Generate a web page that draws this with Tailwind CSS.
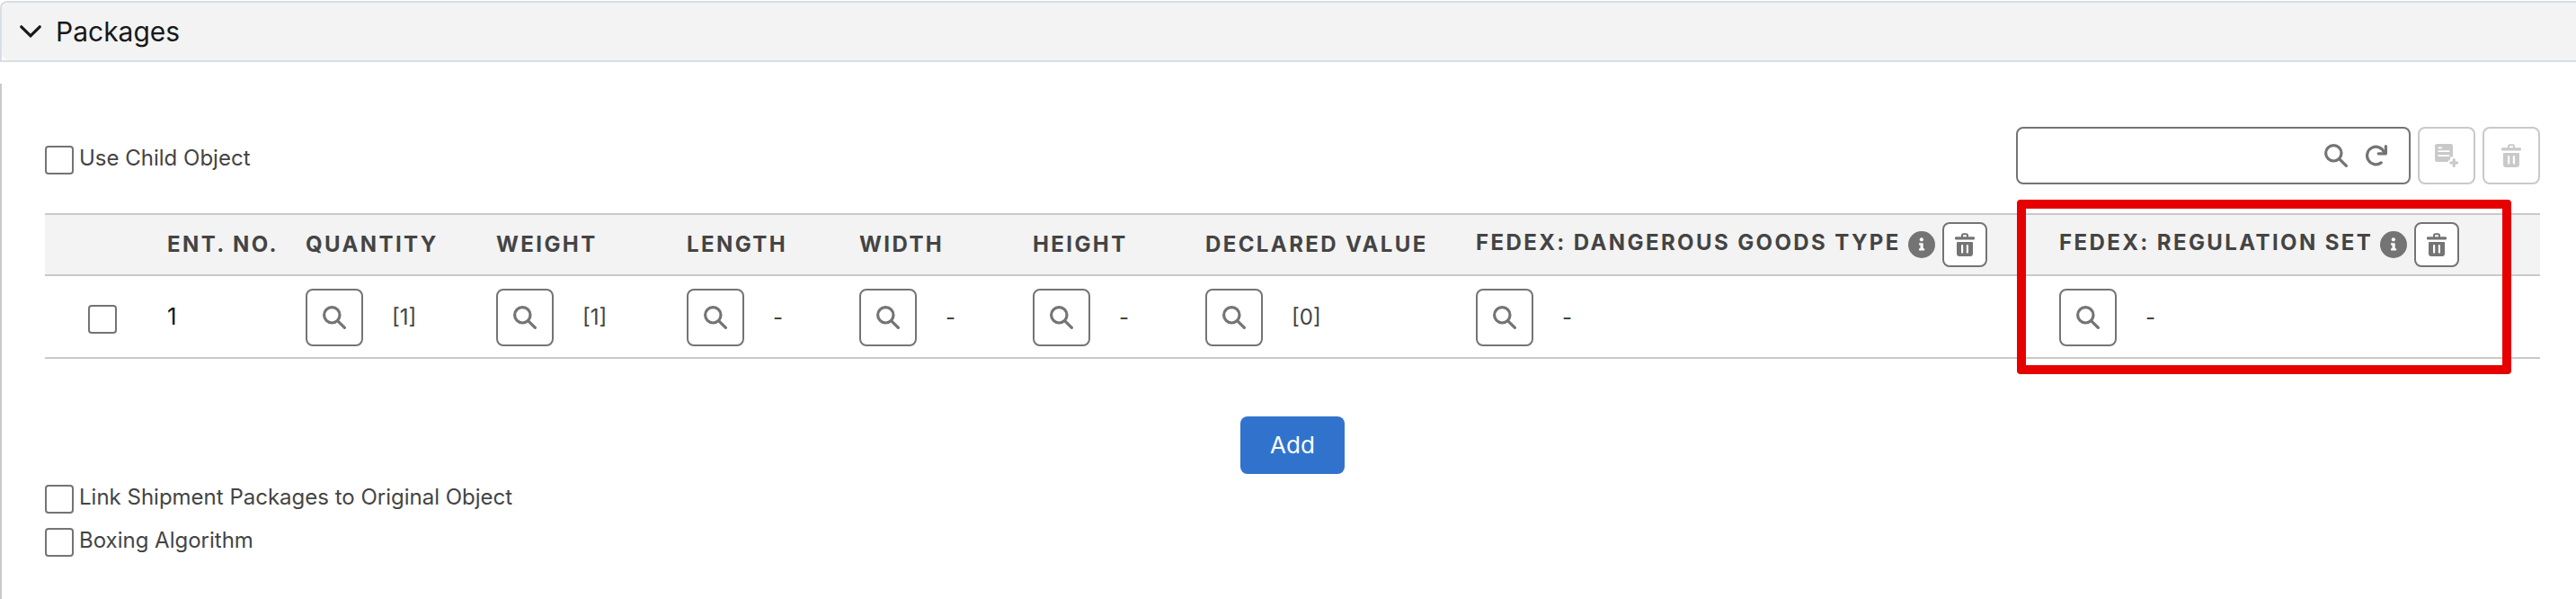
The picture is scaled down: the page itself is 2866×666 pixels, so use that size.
<!DOCTYPE html>
<html lang="en">
<head>
  <meta charset="UTF-8">
  <meta name="viewport" content="width=device-width, initial-scale=1.0">
  <title>Packages</title>
  <script src="https://cdn.jsdelivr.net/npm/@tailwindcss/browser@4"></script>
</head>
<body class="bg-white min-h-screen flex flex-col font-['Inter','Liberation_Sans',sans-serif] text-2xl text-[#444444]">

  <!-- Icons -->
  <svg class="hidden">
    <symbol id="icon-search" viewBox="0 0 26 26">
      <circle cx="10.3" cy="10.3" r="8.7" fill="none" stroke="currentColor" stroke-width="3.2"/>
      <path d="M16.8 16.8L24.4 24.4" fill="none" stroke="currentColor" stroke-width="3.2" stroke-linecap="round"/>
    </symbol>
    <symbol id="icon-refresh" viewBox="0 0 24 24">
      <path d="M17.2 19.9A9.8 9.8 0 1 1 20.6 8.6" fill="none" stroke="currentColor" stroke-width="3.2" stroke-linecap="round"/>
      <path d="M22.4 1.6V9.8H14.2" fill="none" stroke="currentColor" stroke-width="3.2" stroke-linecap="round" stroke-linejoin="round"/>
    </symbol>
    <symbol id="icon-note-add" viewBox="0 0 26 26">
      <path fill="currentColor" fill-rule="evenodd" d="M2.5 0H17.5Q20 0 20 2.5V14.2H18.6Q17 14.2 17 15.8V17L14 20H2.5Q0 20 0 17.5V2.5Q0 0 2.5 0ZM4.2 3.4a.9 .9 0 0 0 0 1.8H7.2a.9 .9 0 0 0 0-1.8ZM4.2 7.3a.9 .9 0 0 0 0 1.8H15.6a.9 .9 0 0 0 0-1.8ZM4.2 12.2a.9 .9 0 0 0 0 1.8H15.6a.9 .9 0 0 0 0-1.8Z"/>
      <path d="M21.2 17.6V24.4M17.8 21H24.6" fill="none" stroke="currentColor" stroke-width="3.2" stroke-linecap="round"/>
    </symbol>
    <symbol id="icon-trash" viewBox="0 0 22 26">
      <path d="M8 5V3Q8 1.3 9.6 1.3H12.4Q14 1.3 14 3V5" fill="none" stroke="currentColor" stroke-width="2"/>
      <rect x="0" y="4.3" width="22" height="3.2" rx="1.2" fill="currentColor"/>
      <path fill="currentColor" fill-rule="evenodd" d="M2 11Q2 10 3 10H19Q20 10 20 11V23Q20 26 17 26H5Q2 26 2 23ZM7 14.2V21.6a1.1 1.1 0 0 0 2.2 0V14.2a1.1 1.1 0 0 0-2.2 0ZM12.8 14.2V21.6a1.1 1.1 0 0 0 2.2 0V14.2a1.1 1.1 0 0 0-2.2 0Z"/>
    </symbol>
    <symbol id="icon-info" viewBox="0 0 30 30">
      <circle cx="15" cy="15" r="15" fill="currentColor"/>
      <circle cx="14.9" cy="9.3" r="2.1" fill="#ffffff"/>
      <path fill="#ffffff" d="M12.6 13.2H16.1Q16.7 13.2 16.7 13.8V19.2H17.6Q18.2 19.2 18.2 19.8V20.8Q18.2 21.4 17.6 21.4H12.6Q12 21.4 12 20.8V19.8Q12 19.2 12.6 19.2H13.5V15.4H12.6Q12 15.4 12 14.8V13.8Q12 13.2 12.6 13.2Z"/>
    </symbol>
  </svg>

  <!-- Section Header -->
  <header class="mt-px border-2 border-r-0 border-[#d8dde6] rounded-tl-lg">
    <button type="button" aria-expanded="true" class="w-full h-16 pl-5 flex items-center gap-4 rounded-l-lg bg-[#f3f3f3] text-3xl text-[#181818]">
      <svg class="w-6 h-3.5" viewBox="0 0 24 14"><path d="M1.8 1.8L12 11.8L22.2 1.8" fill="none" stroke="currentColor" stroke-width="3.2" stroke-linecap="round"/></svg>
      Packages
    </button>
  </header>

  <!-- Section Content -->
  <main class="mt-6 flex-1 border-l-2 border-[#c9c9c9] pt-12 pl-12 pr-10">

    <div class="flex justify-between items-center">
      <div class="h-8 mt-2.5 flex items-center gap-1.5">
        <input type="checkbox" id="use-child" class="appearance-none size-8 border-2 border-[#747474] rounded bg-white">
        <label for="use-child" class="pb-1">Use Child Object</label>
      </div>

      <!-- Toolbar -->
      <div class="flex gap-2">
        <div class="w-[439px] h-16 pl-6 pr-6 flex items-center gap-5 border-2 border-[#747474] rounded-lg text-[#747474]">
          <input type="text" aria-label="Search field" class="flex-1 min-w-0 h-full focus:outline-none">
          <button type="button" aria-label="Search"><svg class="size-[26px]"><use href="#icon-search"/></svg></button>
          <button type="button" aria-label="Refresh"><svg class="size-6"><use href="#icon-refresh"/></svg></button>
        </div>
        <button type="button" aria-label="Add field" disabled class="size-16 flex justify-center items-center border-2 border-[#c9c9c9] rounded-lg text-[#c9c9c9]"><svg class="size-[26px]"><use href="#icon-note-add"/></svg></button>
        <button type="button" aria-label="Delete field" disabled class="size-16 flex justify-center items-center border-2 border-[#c9c9c9] rounded-lg text-[#c9c9c9]"><svg class="w-[22px] h-[26px]"><use href="#icon-trash"/></svg></button>
      </div>
    </div>

    <!-- Packages Table -->
    <div class="relative mt-8">
      <table class="w-full table-fixed border-separate border-spacing-0 text-left">
        <colgroup>
          <col class="w-[120px]">
          <col class="w-[154px]">
          <col class="w-[212px]">
          <col class="w-[212px]">
          <col class="w-[192px]">
          <col class="w-[193px]">
          <col class="w-[192px]">
          <col class="w-[301px]">
          <col class="w-[649px]">
          <col>
        </colgroup>
        <thead class="bg-[#f3f3f3] tracking-widest whitespace-nowrap">
          <tr class="h-[70px]">
            <th class="border-y-2 border-[#c9c9c9]"></th>
            <th class="border-y-2 border-[#c9c9c9] pl-4">ENT. NO.</th>
            <th class="border-y-2 border-[#c9c9c9] pl-4">QUANTITY</th>
            <th class="border-y-2 border-[#c9c9c9] pl-4">WEIGHT</th>
            <th class="border-y-2 border-[#c9c9c9] pl-4">LENGTH</th>
            <th class="border-y-2 border-[#c9c9c9] pl-4">WIDTH</th>
            <th class="border-y-2 border-[#c9c9c9] pl-4">HEIGHT</th>
            <th class="border-y-2 border-[#c9c9c9] pl-4">DECLARED VALUE</th>
            <th class="border-y-2 border-[#c9c9c9] pl-4">
              <div class="flex items-center gap-2">
                <span class="pb-1">FEDEX: DANGEROUS GOODS TYPE</span>
                <svg class="size-[30px] text-[#747474]"><use href="#icon-info"/></svg>
                <button type="button" aria-label="Delete column" class="size-[50px] flex justify-center items-center bg-white border-2 border-[#747474] rounded-lg text-[#747474]"><svg class="w-[22px] h-[26px]"><use href="#icon-trash"/></svg></button>
              </div>
            </th>
            <th class="border-y-2 border-[#c9c9c9] pl-4">
              <div class="flex items-center gap-2">
                <span class="pb-1">FEDEX: REGULATION SET</span>
                <svg class="size-[30px] text-[#747474]"><use href="#icon-info"/></svg>
                <button type="button" aria-label="Delete column" class="size-[50px] flex justify-center items-center bg-white border-2 border-[#747474] rounded-lg text-[#747474]"><svg class="w-[22px] h-[26px]"><use href="#icon-trash"/></svg></button>
              </div>
            </th>
          </tr>
        </thead>
        <tbody>
          <tr class="h-[92px]">
            <td class="border-b-2 border-[#c9c9c9] pl-12 pt-1.5">
              <input type="checkbox" aria-label="Select package 1" class="block appearance-none size-8 border-2 border-[#747474] rounded bg-white">
            </td>
            <td class="border-b-2 border-[#c9c9c9] pl-4 text-[26px] text-[#181818]">1</td>
            <td class="border-b-2 border-[#c9c9c9] pl-4 pt-0.5">
              <div class="flex items-center gap-8">
                <button type="button" aria-label="Look up quantity" class="size-16 flex justify-center items-center border-2 border-[#747474] rounded-lg text-[#747474]"><svg class="size-[26px]"><use href="#icon-search"/></svg></button>
                [1]
              </div>
            </td>
            <td class="border-b-2 border-[#c9c9c9] pl-4 pt-0.5">
              <div class="flex items-center gap-8">
                <button type="button" aria-label="Look up weight" class="size-16 flex justify-center items-center border-2 border-[#747474] rounded-lg text-[#747474]"><svg class="size-[26px]"><use href="#icon-search"/></svg></button>
                [1]
              </div>
            </td>
            <td class="border-b-2 border-[#c9c9c9] pl-4 pt-0.5">
              <div class="flex items-center gap-8">
                <button type="button" aria-label="Look up length" class="size-16 flex justify-center items-center border-2 border-[#747474] rounded-lg text-[#747474]"><svg class="size-[26px]"><use href="#icon-search"/></svg></button>
                -
              </div>
            </td>
            <td class="border-b-2 border-[#c9c9c9] pl-4 pt-0.5">
              <div class="flex items-center gap-8">
                <button type="button" aria-label="Look up width" class="size-16 flex justify-center items-center border-2 border-[#747474] rounded-lg text-[#747474]"><svg class="size-[26px]"><use href="#icon-search"/></svg></button>
                -
              </div>
            </td>
            <td class="border-b-2 border-[#c9c9c9] pl-4 pt-0.5">
              <div class="flex items-center gap-8">
                <button type="button" aria-label="Look up height" class="size-16 flex justify-center items-center border-2 border-[#747474] rounded-lg text-[#747474]"><svg class="size-[26px]"><use href="#icon-search"/></svg></button>
                -
              </div>
            </td>
            <td class="border-b-2 border-[#c9c9c9] pl-4 pt-0.5">
              <div class="flex items-center gap-8">
                <button type="button" aria-label="Look up declared value" class="size-16 flex justify-center items-center border-2 border-[#747474] rounded-lg text-[#747474]"><svg class="size-[26px]"><use href="#icon-search"/></svg></button>
                [0]
              </div>
            </td>
            <td class="border-b-2 border-[#c9c9c9] pl-4 pt-0.5">
              <div class="flex items-center gap-8">
                <button type="button" aria-label="Look up dangerous goods type" class="size-16 flex justify-center items-center border-2 border-[#747474] rounded-lg text-[#747474]"><svg class="size-[26px]"><use href="#icon-search"/></svg></button>
                -
              </div>
            </td>
            <td class="border-b-2 border-[#c9c9c9] pl-4 pt-0.5">
              <div class="flex items-center gap-8">
                <button type="button" aria-label="Look up regulation set" class="size-16 flex justify-center items-center border-2 border-[#747474] rounded-lg text-[#747474]"><svg class="size-[26px]"><use href="#icon-search"/></svg></button>
                -
              </div>
            </td>
          </tr>
        </tbody>
      </table>

      <!-- Highlight around the last column -->
      <div class="absolute -top-[15px] -bottom-[17px] right-8 w-[550px] border-10 border-[#e60000] rounded pointer-events-none"></div>
    </div>

    <div class="mt-16 flex justify-center">
      <button type="button" class="h-16 w-[116px] bg-[#3173cc] hover:bg-[#2560b0] text-white text-[26px] rounded-lg">Add</button>
    </div>

    <!-- Options -->
    <div class="mt-3 flex flex-col gap-4">
      <div class="h-8 flex items-center gap-1.5">
        <input type="checkbox" id="link-packages" class="appearance-none size-8 border-2 border-[#747474] rounded bg-white">
        <label for="link-packages" class="pb-1">Link Shipment Packages to Original Object</label>
      </div>
      <div class="h-8 flex items-center gap-1.5">
        <input type="checkbox" id="boxing" class="appearance-none size-8 border-2 border-[#747474] rounded bg-white">
        <label for="boxing" class="pb-1">Boxing Algorithm</label>
      </div>
    </div>
  </main>

</body>
</html>
